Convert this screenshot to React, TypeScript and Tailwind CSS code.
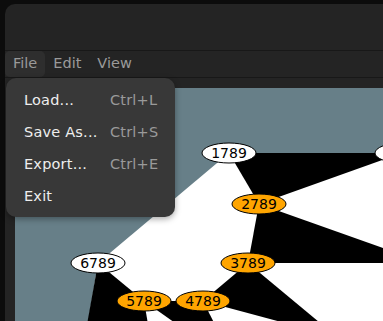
import React from "react";

type Node = { label: string; x: number; y: number; hot?: boolean };

const nodes: Node[] = [
    { label: "1789", x: 229, y: 153 },
    { label: "", x: 402, y: 153 },
    { label: "2789", x: 259, y: 204, hot: true },
    { label: "6789", x: 98, y: 263 },
    { label: "3789", x: 248, y: 263, hot: true },
    { label: "5789", x: 144, y: 301, hot: true },
    { label: "4789", x: 203, y: 301, hot: true },
];

const blackFaces = [
    "229,153 402,153 259,204",
    "259,204 248,263 425,263",
    "248,263 203,301 337,337",
    "98,263 144,301 149,330 86,330",
    "144,301 203,301 236,366",
];

const menuItems = [
    { label: "Load...", key: "Ctrl+L" },
    { label: "Save As...", key: "Ctrl+S" },
    { label: "Export...", key: "Ctrl+E" },
    { label: "Exit", key: "" },
];

function Graph() {
    return (
        <svg width={368} height={233} viewBox="15 88 368 233" className="block">
            <rect x={15} y={88} width={368} height={233} fill="#677f88" />
            <polygon points="229,153 440,153 440,340 85,340 98,263" fill="#ffffff" />
            {blackFaces.map((p, i) => (
                <polygon key={i} points={p} fill="#000000" />
            ))}
            {nodes.map((n, i) => (
                <g key={i}>
                    <ellipse
                        cx={n.x}
                        cy={n.y}
                        rx={27}
                        ry={10}
                        fill={n.hot ? "#ffa500" : "#ffffff"}
                        stroke="#000000"
                        strokeWidth={1}
                    />
                    <text
                        x={n.x}
                        y={n.y + 5}
                        textAnchor="middle"
                        fontSize={14}
                        fontFamily="'DejaVu Sans', sans-serif"
                        fill="#000000"
                    >
                        {n.label}
                    </text>
                </g>
            ))}
        </svg>
    );
}

export default function App() {
    return (
        <div className="relative w-[383px] h-[321px] overflow-hidden bg-[#0c0c0c] pt-[4px] pl-[5px] font-['DejaVu_Sans',sans-serif] text-[14.5px]">
            <div className="flex flex-col h-full bg-[#242424] rounded-tl-[10px]">
                <div className="h-[47px] shrink-0 border-b border-[#181818]" />
                <div className="flex h-[27px] shrink-0 items-stretch border-b border-[#181818] text-[#9a9a9a]">
                    <div className="flex items-center px-2 rounded-[5px] bg-[#2e2e2e]">File</div>
                    <div className="flex items-center px-2">Edit</div>
                    <div className="flex items-center px-2">View</div>
                </div>
                <div className="flex-1 pt-[10px] pl-[10px] overflow-hidden">
                    <Graph />
                </div>
            </div>

            <div className="absolute left-[6px] top-[78px] w-[169px] h-[139px] rounded-[10px] bg-[#383838] pt-[7px] shadow-[0_2px_6px_rgba(0,0,0,0.35)]">
                {menuItems.map((m) => (
                    <div key={m.label} className="flex items-center h-[32px] pl-[18px] tracking-[0.2px]">
                        <span className="w-[86px] text-[#eeeeee]">{m.label}</span>
                        <span className="text-[#9a9a9a]">{m.key}</span>
                    </div>
                ))}
            </div>
        </div>
    );
}
